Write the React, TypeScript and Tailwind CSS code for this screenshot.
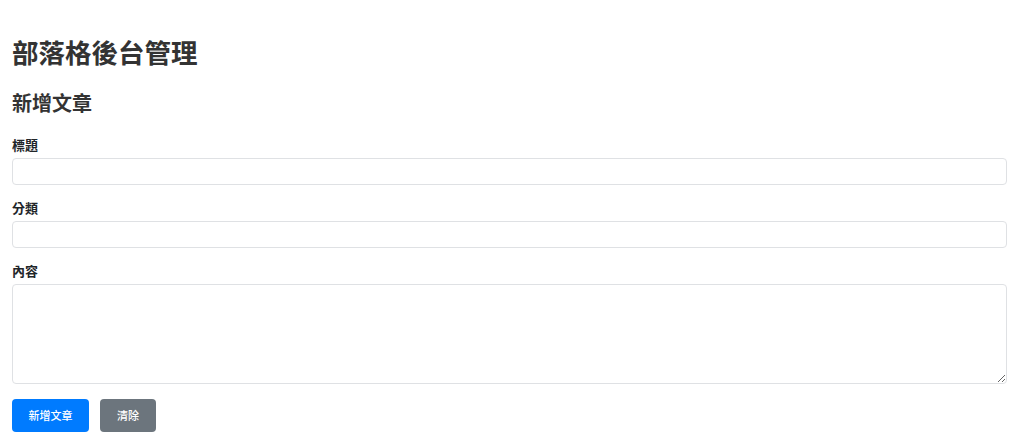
import React from "react";

const font = { fontFamily: '"Noto Sans CJK TC", "Noto Sans", sans-serif' };

const Field: React.FC<{ label: string; area?: boolean }> = ({ label, area }) => (
  <div className="mb-[14px]">
    <label className="block text-[13px] leading-[18px] font-bold text-[#212529] mb-[4px]">{label}</label>
    {area ? (
      <textarea className="block w-full h-[100px] rounded-[4px] border border-[#dfe1e4] bg-white" />
    ) : (
      <input type="text" className="block w-full h-[27px] rounded-[4px] border border-[#dfe1e4] bg-white" />
    )}
  </div>
);

export default function App() {
  return (
    <div className="bg-white min-h-[441px] pl-3 pr-[17px] pt-[36px] text-[#333]" style={font}>
      <h1 className="text-[26.5px] leading-[32px] font-bold">部落格後台管理</h1>
      <h2 className="mt-[23px] text-[20px] leading-[24px] font-bold">新增文章</h2>
      <form className="mt-[21px]">
        <Field label="標題" />
        <Field label="分類" />
        <Field label="內容" area />
        <div className="flex gap-[11px] pt-[1px]">
          <button type="button" className="h-[33px] w-[77px] rounded-[4px] bg-[#007bff] text-white text-[11px] font-medium">
            新增文章
          </button>
          <button type="button" className="h-[33px] w-[56px] rounded-[4px] bg-[#6c757d] text-white text-[11px] font-medium">
            清除
          </button>
        </div>
      </form>
    </div>
  );
}
